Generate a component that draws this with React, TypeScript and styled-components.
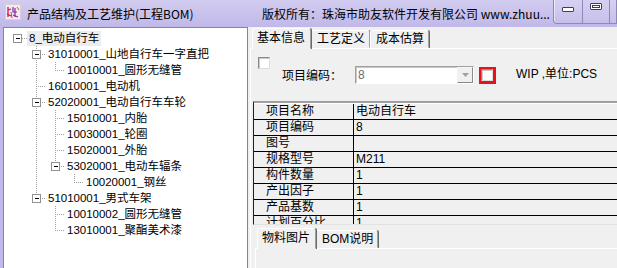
import React from 'react';
import styled, { createGlobalStyle } from 'styled-components';

const GlobalStyle = createGlobalStyle`
	html, body {
		margin: 0;
		padding: 0;
		background: #f0f0f0;
	}
	body {
		font-family: "Liberation Sans", "Noto Sans CJK SC", sans-serif;
		font-size: 12px;
		color: #000;
	}
	* {
		box-sizing: border-box;
	}
`;

type TreeNode = { label: string; children?: TreeNode[] };

type FlatRow = {
	label: string;
	depth: number;
	hasNext: boolean;
	hasChildren: boolean;
	guides: boolean[];
};

const bomTree: TreeNode = {
	label: '8_电动自行车',
	children: [
		{ label: '31010001_山地自行车一字直把', children: [{ label: '10010001_圆形无缝管' }] },
		{ label: '16010001_电动机' },
		{
			label: '52020001_电动自行车车轮',
			children: [
				{ label: '15010001_内胎' },
				{ label: '10030001_轮圈' },
				{ label: '15020001_外胎' },
				{ label: '53020001_电动车辐条', children: [{ label: '10020001_钢丝' }] },
			],
		},
		{
			label: '51010001_男式车架',
			children: [{ label: '10010002_圆形无缝管' }, { label: '13010001_聚酯美术漆' }],
		},
	],
};

const flatten = (node: TreeNode, depth: number, hasNext: boolean, guides: boolean[], out: FlatRow[]) => {
	const kids = node.children || [];
	out.push({ label: node.label, depth, hasNext, hasChildren: kids.length > 0, guides });
	kids.forEach((kid, i) => {
		flatten(kid, depth + 1, i < kids.length - 1, depth >= 1 ? [...guides, hasNext] : guides, out);
	});
	return out;
};

const treeRows = flatten(bomTree, 0, false, [], []);

const gridRows: [string, string][] = [
	['项目名称', '电动自行车'],
	['项目编码', '8'],
	['图号', ''],
	['规格型号', 'M211'],
	['构件数量', '1'],
	['产出因子', '1'],
	['产品基数', '1'],
	['计划百分比', '1'],
];

/* ---------- window frame ---------- */

const Window = styled.div`
	width: 617px;
	height: 268px;
	overflow: hidden;
	display: flex;
	flex-direction: column;
	background: #c1b9e9;
`;

const TitleBar = styled.div`
	flex: none;
	height: 26px;
	display: flex;
	align-items: flex-start;
	background: linear-gradient(180deg, #d2ccf0 0%, #c8c1ec 55%, #c1b9e9 100%);
	font-family: "Noto Sans CJK SC", sans-serif;
	font-size: 12px;
	white-space: nowrap;
`;

const AppIcon = styled.svg`
	flex: none;
	margin: 4px 6px 0 5px;
`;

const Caption = styled.div`
	flex: none;
	width: 235px;
	line-height: 27px;
`;

const Copyright = styled.div`
	flex: 1;
	line-height: 27px;
	overflow: hidden;
`;

const CaptionButtons = styled.div`
	flex: none;
	width: 64px;
	height: 24px;
	display: flex;
	border: 1px solid #8f89b8;
	border-top: none;
	border-radius: 0 0 0 4px;
	box-shadow: inset 1px 0 rgba(255, 255, 255, 0.55);
	background: linear-gradient(180deg, #d6d1f2, #c6bfeb);
`;

const CaptionButton = styled.div<{ $w: number }>`
	flex: none;
	width: ${({ $w }) => $w}px;
	height: 100%;
	border-right: 1px solid #8f89b8;
	display: flex;
	justify-content: center;
	&:last-child {
		border-right: none;
	}
`;

const MinGlyph = styled.div`
	width: 12px;
	height: 5px;
	margin-top: 7px;
	border: 1px solid #3c3c5a;
	border-radius: 1px;
	background: #fff;
`;

const MaxGlyph = styled.div`
	width: 12px;
	height: 7px;
	margin-top: 3px;
	border: 1px solid #3c3c5a;
	border-radius: 1px;
	background: #fff;
	box-shadow: inset 0 0 0 1px #fff, inset 0 0 0 2px #3c3c5a;
`;

const Body = styled.div`
	flex: 1;
	display: flex;
	padding: 1px 0 0 3px;
	min-height: 0;
`;

const Client = styled.div`
	flex: 1;
	display: flex;
	background: #f0f0f0;
	min-height: 0;
`;

/* ---------- tree ---------- */

const TreePanel = styled.div`
	flex: none;
	width: 245px;
	background: #fff;
	border: 1px solid #828790;
	border-bottom: none;
	padding-top: 2px;
`;

const TreeRow = styled.div`
	height: 16px;
	display: flex;
	align-items: center;
	white-space: nowrap;
`;

const TreeLabel = styled.span<{ $selected?: boolean }>`
	padding: 0 2px;
	line-height: 15px;
	height: 15px;
	font-size: 11.5px;
	background: ${({ $selected }) => ($selected ? '#ececec' : 'transparent')};
`;

const LINE = '#a0a0a0';

const cx = (d: number) => 13 + 19 * d;

const TreeLines = ({ row }: { row: FlatRow }) => {
	const { depth, hasNext, hasChildren, guides } = row;
	const width = cx(depth) + 10;
	const x = cx(depth) + 0.5;
	return (
		<svg width={width} height={16} style={{ flex: 'none' }} shapeRendering="crispEdges">
			{guides.map((on, i) =>
				on ? (
					<line key={i} x1={cx(i + 1) + 0.5} y1={0} x2={cx(i + 1) + 0.5} y2={16} stroke={LINE} strokeDasharray="1 1" />
				) : null,
			)}
			{depth >= 1 && (
				<line x1={x} y1={0} x2={x} y2={hasNext ? 16 : 9} stroke={LINE} strokeDasharray="1 1" />
			)}
			<line
				x1={depth >= 1 ? cx(depth) : cx(depth) + 5}
				y1={8.5}
				x2={cx(depth) + 10}
				y2={8.5}
				stroke={LINE}
				strokeDasharray="1 1"
			/>
			{hasChildren && (
				<>
					<rect x={cx(depth) - 3.5} y={4.5} width={8} height={8} fill="#fff" stroke="#919191" />
					<line x1={cx(depth) - 1} y1={8.5} x2={cx(depth) + 3} y2={8.5} stroke="#000" />
				</>
			)}
		</svg>
	);
};

/* ---------- right pane ---------- */

const RightPane = styled.div`
	flex: 1;
	display: flex;
	flex-direction: column;
	padding-left: 2px;
	min-width: 0;
`;

const TabStrip = styled.div<{ $inset?: number }>`
	flex: none;
	height: 21px;
	display: flex;
	align-items: flex-end;
	padding-left: ${({ $inset }) => $inset ?? 2}px;
`;

const Tab = styled.div<{ $active?: boolean }>`
	position: relative;
	height: ${({ $active }) => ($active ? 21 : 18)}px;
	margin-bottom: ${({ $active }) => ($active ? -1 : 0)}px;
	padding: ${({ $active }) => ($active ? '0 5px 0 4px' : '0 4px 0 5px')};
	z-index: ${({ $active }) => ($active ? 2 : 1)};
	background: #f0f0f0;
	border: 1px solid #a0a0a0;
	border-color: #fff #a0a0a0 transparent #fff;
	border-radius: 2px 2px 0 0;
	box-shadow: 1px 0 0 #696969;
	font-family: "Liberation Sans", "Noto Sans CJK SC", sans-serif;
	font-size: 12px;
	line-height: ${({ $active }) => ($active ? 18 : 16)}px;
	white-space: nowrap;
`;

const TabPage = styled.div`
	flex: 1;
	display: flex;
	flex-direction: column;
	border-top: 1px solid #fff;
	border-left: 1px solid #fff;
	min-height: 0;
`;

const HeaderArea = styled.div`
	flex: none;
	height: 52px;
	display: flex;
	flex-direction: column;
	padding: 8px 0 0 7px;
`;

const CheckBox = styled.div`
	flex: none;
	width: 12px;
	height: 12px;
	background: #fff;
	border: 1px solid;
	border-color: #8a8a8a #dcdcdc #dcdcdc #8a8a8a;
	box-shadow: inset 1px 1px 0 #c8c8c8;
`;

const FieldRow = styled.div`
	display: flex;
	align-items: center;
	height: 18px;
	margin-top: -3px;
	padding-left: 24px;
`;

const FieldLabel = styled.div`
	flex: none;
	width: 73px;
	font-size: 12px;
	line-height: 18px;
	padding-top: 1px;
`;

const Combo = styled.div`
	flex: none;
	width: 119px;
	height: 18px;
	display: flex;
	background: #fff;
	border: 1px solid;
	border-color: #a0a0a0 #fff #fff #a0a0a0;
	box-shadow: inset 1px 1px 0 #c8c8c8;
`;

const ComboText = styled.div`
	flex: 1;
	padding-left: 2px;
	color: #6d6d6d;
	font-size: 12px;
	line-height: 16px;
`;

const ComboButton = styled.div`
	flex: none;
	width: 16px;
	height: 16px;
	display: flex;
	align-items: center;
	justify-content: center;
	background: #f0f0f0;
	border: 1px solid;
	border-color: #f4f4f4 #8a8a8a #8a8a8a #f4f4f4;
`;

const RedFrame = styled.div`
	flex: none;
	width: 17px;
	height: 17px;
	margin-left: 5px;
	padding: 2px 4px 3px 2px;
	background: #e5141b;
`;

const WipText = styled.div`
	margin-left: 20px;
	font-size: 12px;
	line-height: 18px;
	white-space: nowrap;
	padding-bottom: 3px;
`;

const Grid = styled.div`
	flex: none;
	height: 124px;
	margin-left: 2px;
	overflow: hidden;
	border-top: 2px solid #a0a0a0;
	border-left: 1px solid #202020;
	border-bottom: 1px solid #e2e2e2;
	box-shadow: inset 0 1px 0 #fff;
	padding-top: 1px;
`;

const GridRow = styled.div`
	display: flex;
	height: 16px;
	border-bottom: 1px solid #000;
`;

const GridCell = styled.div<{ $head?: boolean }>`
	flex: ${({ $head }) => ($head ? 'none' : '1')};
	width: ${({ $head }) => ($head ? '100px' : 'auto')};
	padding-left: ${({ $head }) => ($head ? 12 : 2)}px;
	border-right: ${({ $head }) => ($head ? '1px solid #000' : 'none')};
	font-size: 12px;
	line-height: 15px;
	white-space: nowrap;
`;

const SubTabs = styled.div`
	flex: 1;
	display: flex;
	flex-direction: column;
	margin: 2px 0 0 4px;
`;

const App = () => {
	return (
		<Window>
			<GlobalStyle />
			<TitleBar>
				<AppIcon width={16} height={16} viewBox="0 0 16 16">
					<rect x={0.5} y={0.5} width={15} height={15} fill="#f3ecef" stroke="#d9cfd6" />
					<path d="M3 3 L3 13 M3 6 L6 5 M2 10 L6 12" stroke="#c2185b" strokeWidth={1.3} fill="none" />
					<path d="M8 3 L8 8 L12 8 M10 4 L10 13 M8 11 L13 13" stroke="#8e24aa" strokeWidth={1.2} fill="none" />
					<path d="M12 3 L14 6 M6 8 L7 14" stroke="#e53935" strokeWidth={1} fill="none" />
				</AppIcon>
				<Caption>产品结构及工艺维护(工程BOM)</Caption>
				<Copyright>版权所有：珠海市助友软件开发有限公司 www.zhuu...</Copyright>
				<CaptionButtons>
					<CaptionButton $w={29}>
						<MinGlyph />
					</CaptionButton>
					<CaptionButton $w={27}>
						<MaxGlyph />
					</CaptionButton>
					<CaptionButton $w={8} />
				</CaptionButtons>
			</TitleBar>
			<Body>
				<Client>
					<TreePanel>
						{treeRows.map((row, i) => (
							<TreeRow key={i}>
								<TreeLines row={row} />
								<TreeLabel $selected={i === 0}>{row.label}</TreeLabel>
							</TreeRow>
						))}
					</TreePanel>
					<RightPane>
						<TabStrip>
							<Tab $active>基本信息</Tab>
							<Tab>工艺定义</Tab>
							<Tab>成本估算</Tab>
						</TabStrip>
						<TabPage>
							<HeaderArea>
								<CheckBox />
								<FieldRow>
									<FieldLabel>项目编码：</FieldLabel>
									<Combo>
										<ComboText>8</ComboText>
										<ComboButton>
											<svg width={7} height={4} viewBox="0 0 7 4">
												<path d="M0 0 H7 L3.5 4 Z" fill="#a0a0a0" />
											</svg>
										</ComboButton>
									</Combo>
									<RedFrame>
										<CheckBox />
									</RedFrame>
									<WipText>WIP ,单位:PCS</WipText>
								</FieldRow>
							</HeaderArea>
							<Grid>
								{gridRows.map(([name, value]) => (
									<GridRow key={name}>
										<GridCell $head>{name}</GridCell>
										<GridCell>{value}</GridCell>
									</GridRow>
								))}
							</Grid>
							<SubTabs>
								<TabStrip>
									<Tab $active>物料图片</Tab>
									<Tab>BOM说明</Tab>
								</TabStrip>
								<TabPage />
							</SubTabs>
						</TabPage>
					</RightPane>
				</Client>
			</Body>
		</Window>
	);
};

export default App;
